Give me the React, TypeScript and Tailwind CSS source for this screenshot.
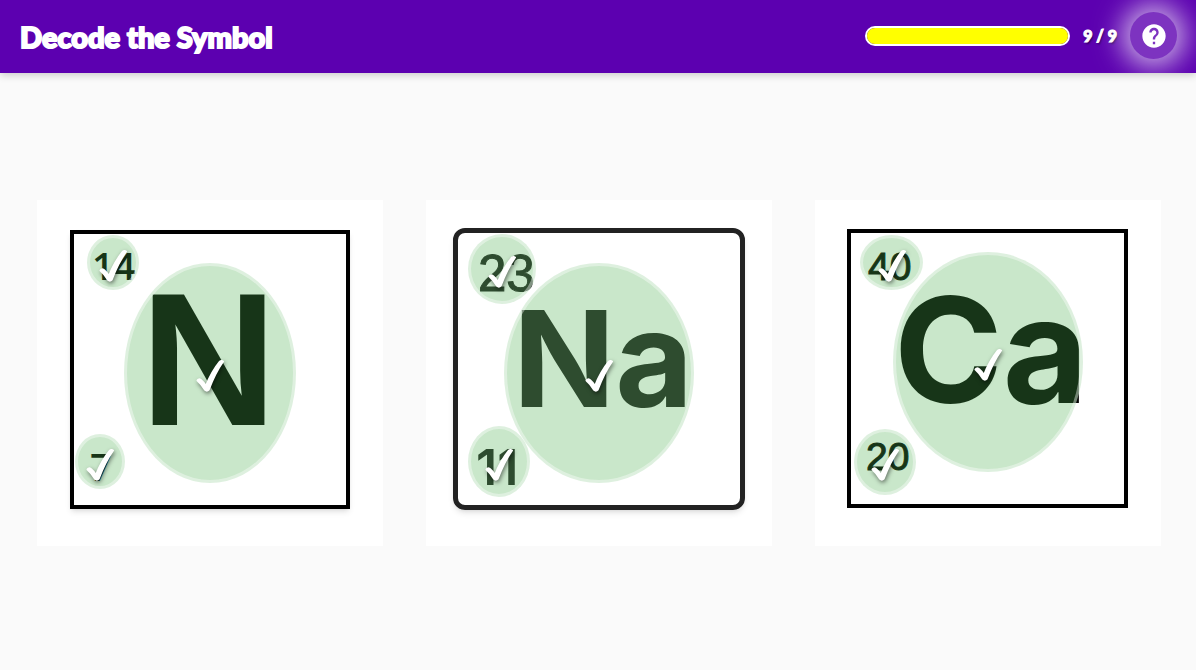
import { MdHelp } from "react-icons/md";

type Hotspot = { label: string; text: string; textClass: string; spotClass: string };
type Card = { name: string; frameClass: string; inkClass: string; spots: Hotspot[] };

const cards: Card[] = [
  {
    name: "Nitrogen",
    frameClass: "left-[33px] top-[30px] h-[279px] w-[280px] border-4 border-black shadow-md",
    inkClass: "text-black",
    spots: [
      { label: "Mass number", text: "14", textClass: "left-[55px] top-[46px] font-['Open_Sans',sans-serif] text-[38px] font-semibold", spotClass: "left-[50px] top-[35px] h-[55px] w-[52px]" },
      { label: "Symbol", text: "N", textClass: "left-[103px] top-[64px] text-[190px] font-bold", spotClass: "left-[87px] top-[63px] h-[220px] w-[172px]" },
      { label: "Atomic number", text: "7", textClass: "left-[53px] top-[247px] font-['Open_Sans',sans-serif] text-[38px] font-semibold", spotClass: "left-[38px] top-[234px] h-[55px] w-[50px]" },
    ],
  },
  {
    name: "Sodium",
    frameClass: "left-[27px] top-[28px] h-[282px] w-[292px] rounded-xl border-5 border-[#222] shadow-md",
    inkClass: "text-[#222]",
    spots: [
      { label: "Mass number", text: "23", textClass: "left-[52px] top-[48px] text-[51px] [-webkit-text-stroke:1px_#222]", spotClass: "left-[42px] top-[34px] h-[70px] w-[68px]" },
      { label: "Symbol", text: "Na", textClass: "left-[87px] top-[91px] font-[Inter,sans-serif] text-[134px] font-bold", spotClass: "left-[78px] top-[63px] h-[220px] w-[190px]" },
      { label: "Atomic number", text: "11", textClass: "left-[50px] top-[242px] font-[Inter,sans-serif] text-[50px] font-semibold", spotClass: "left-[42px] top-[226px] h-[71px] w-[62px]" },
    ],
  },
  {
    name: "Calcium",
    frameClass: "left-[32px] top-[29px] h-[279px] w-[281px] border-4 border-black",
    inkClass: "text-black",
    spots: [
      { label: "Mass number", text: "40", textClass: "left-[53px] top-[47px] text-[39px] [-webkit-text-stroke:1px_black]", spotClass: "left-[45px] top-[35px] h-[55px] w-[63px]" },
      { label: "Symbol", text: "Ca", textClass: "left-[79px] top-[76px] font-[Inter,sans-serif] text-[147px] font-bold", spotClass: "left-[78px] top-[52px] h-[220px] w-[190px]" },
      { label: "Atomic number", text: "20", textClass: "left-[51px] top-[237px] text-[39px] [-webkit-text-stroke:1px_black]", spotClass: "left-[39px] top-[229px] h-[66px] w-[62px]" },
    ],
  },
];

function Check() {
  return (
    <svg viewBox="0 0 30 40" className="h-10 w-[30px] shrink-0 overflow-visible fill-white stroke-white drop-shadow-[1px_2px_2px_rgba(0,0,0,0.5)]" aria-hidden="true">
      <path d="M2.500 27.500 Q3.500 25.500 6 27 Q8.500 29 11 33 Q16.500 19 25 8.500 Q26.500 7.500 28 8.500 Q20 20 13.800 36.500 Q12 38.500 10 36.800 Q7 31.500 2.500 27.500 Z" strokeWidth="2" strokeLinejoin="round" />
    </svg>
  );
}

function ElementCard({ card }: { card: Card }) {
  return (
    <article aria-label={card.name} className="relative h-[346px] w-[346px] shrink-0 bg-white">
      <div className={`absolute ${card.frameClass}`} />
      {card.spots.map((s) => (
        <span key={s.label} className={`absolute leading-none whitespace-nowrap ${card.inkClass} ${s.textClass}`}>
          {s.text}
        </span>
      ))}
      {card.spots.map((s) => (
        <button
          key={s.label}
          type="button"
          aria-label={`${s.label} of ${card.name}`}
          className={`absolute flex items-center justify-center rounded-[50%] border-3 border-white/40 bg-[#4caf50]/30 ${s.spotClass}`}
        >
          <Check />
        </button>
      ))}
    </article>
  );
}

export default function App() {
  return (
    <div className="flex min-h-screen flex-col bg-[#fafafa] font-['Liberation_Sans',Arial,sans-serif]">
      <header className="relative flex h-[73px] items-center justify-between overflow-hidden bg-[#5c00b0] pr-[19px] pb-[2px] pl-5 text-white shadow-[0_2px_8px_rgba(0,0,0,0.2)]">
        <h1 className="pt-[2px] font-[Lato,sans-serif] text-[29px] font-black whitespace-nowrap [-webkit-text-stroke:2px_white]">Decode the Symbol</h1>
        <div className="flex items-center gap-[13px]">
          <div role="progressbar" aria-label="Progress" aria-valuemin={0} aria-valuemax={9} aria-valuenow={9} className="h-5 w-[205px] rounded-full border-2 border-white bg-[#5c00b0]">
            <div className="h-full w-full rounded-full bg-[#ffff00]" />
          </div>
          <span className="font-[Lato,sans-serif] text-base font-black whitespace-nowrap [-webkit-text-stroke:1px_white] [text-shadow:1px_2px_2px_rgba(0,0,0,0.5)]">9 / 9</span>
          <button type="button" aria-label="Help" className="flex size-[47px] items-center justify-center rounded-full bg-[#7d33c0] shadow-[0_0_28px_8px_rgba(255,255,255,0.7)]">
            <MdHelp className="size-7" />
          </button>
        </div>
      </header>
      <main className="flex flex-1 flex-wrap items-center justify-center gap-[43px] pt-[3px] pl-[2px]">
        {cards.map((c) => (
          <ElementCard key={c.name} card={c} />
        ))}
      </main>
    </div>
  );
}
